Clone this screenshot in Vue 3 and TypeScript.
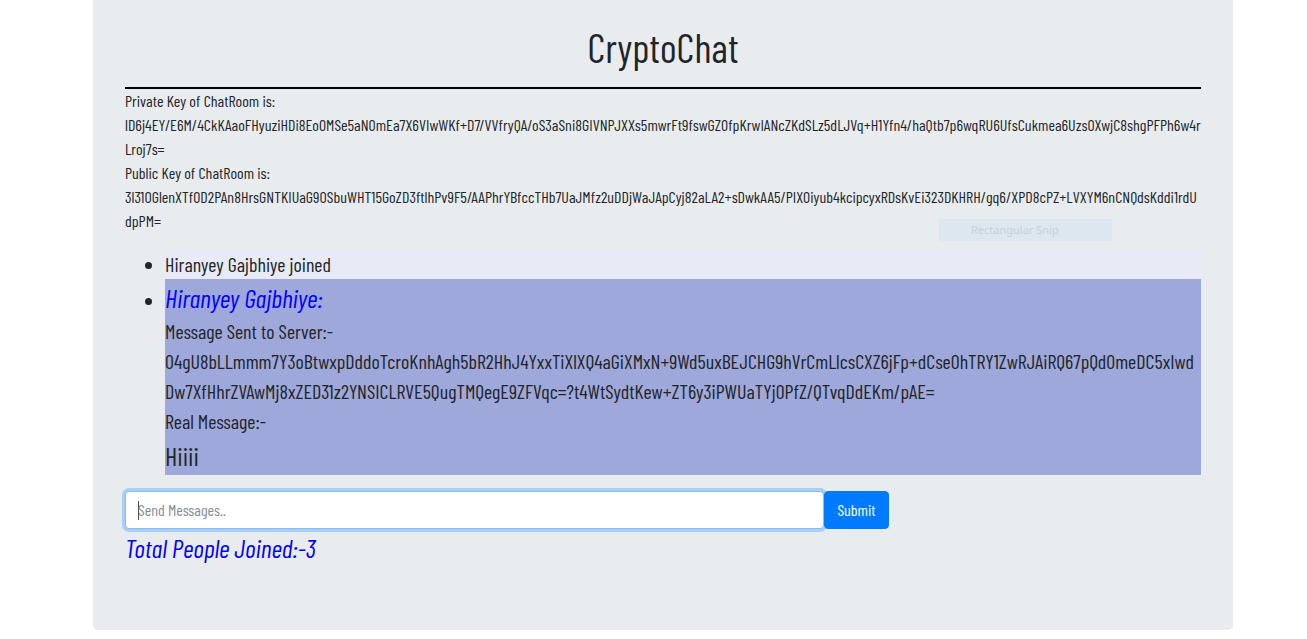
<script setup lang="ts">
import { onMounted, ref } from 'vue'

interface RoomKey {
  label: string
  value: string
}

const keys: RoomKey[] = [
  {
    label: 'Private Key of ChatRoom is:',
    value:
      'lD6j4EY/E6M/4CkKAaoFHyuziHDi8Eo0MSe5aN0mEa7X6VIwWKf+D7/VVfryQA/oS3aSni8GIVNPJXXs5mwrFt9fswGZ0fpKrwIANcZKdSLz5dLJVq+H1Yfn4/haQtb7p6wqRU6UfsCukmea6Uzs0XwjC8shgPFPh6w4rLroj7s=',
  },
  {
    label: 'Public Key of ChatRoom is:',
    value:
      '3l31OGlenXTf0D2PAn8HrsGNTKIUaG9OSbuWHT15GoZD3ftlhPv9F5/AAPhrYBfccTHb7UaJMfz2uDDjWaJApCyj82aLA2+sDwkAA5/PIX0iyub4kcipcyxRDsKvEi323DKHRH/gq6/XPD8cPZ+LVXYM6nCNQdsKddi1rdUdpPM=',
  },
]

const cipher =
  '04gU8bLLmmm7Y3oBtwxpDddoTcroKnhAgh5bR2HhJ4YxxTiXlXQ4aGiXMxN+9Wd5uxBEJCHG9hVrCmLlcsCXZ6jFp+dCse0hTRY1ZwRJAiRQ67pQd0meDC5xIwdDw7XfHhrZVAwMj8xZED31z2YNSICLRVE5QugTMQegE9ZFVqc=?t4WtSydtKew+ZT6y3iPWUaTYj0PfZ/QTvqDdEKm/pAE='

const message = ref('')
const box = ref<HTMLInputElement | null>(null)
onMounted(() => box.value?.focus())
</script>

<template>
  <main class="page">
    <section class="room">
      <h1>CryptoChat</h1>
      <div class="keys">
        <template v-for="key in keys" :key="key.label">
          <p>{{ key.label }}</p>
          <p class="code">{{ key.value }}</p>
        </template>
        <span class="snip">Rectangular Snip</span>
      </div>
      <ul class="feed">
        <li class="joined">Hiranyey Gajbhiye joined</li>
        <li class="message">
          <em class="big name">Hiranyey Gajbhiye:</em>
          <p>Message Sent to Server:-</p>
          <p class="code">{{ cipher }}</p>
          <p>Real Message:-</p>
          <p class="big real">Hiiii</p>
        </li>
      </ul>
      <form class="send" @submit.prevent="message = ''">
        <input ref="box" v-model="message" type="text" placeholder="Send Messages.." aria-label="Send Messages" />
        <span v-if="!message" class="caret" aria-hidden="true"></span>
        <button type="submit">Submit</button>
      </form>
      <em class="big total">Total People Joined:-3</em>
    </section>
  </main>
</template>

<style>
body {
  margin: 0;
  background: #fff;
}
</style>

<style scoped>
.page {
  padding: 0 0 8px 19px;
  color: #212529;
  font-family: "Barlow Condensed", "Roboto Condensed", "Liberation Sans Narrow", "Liberation Sans", sans-serif;
  font-size: 16px;
  line-height: 24px;
}
.room {
  box-sizing: border-box;
  max-width: 1140px;
  margin: 0 auto;
  padding: 23px 32px 64px;
  background: #e9ecef;
  border-radius: 0 0 5px 5px;
}
h1 {
  margin: 0;
  padding-bottom: 16px;
  border-bottom: 2px solid #000;
  font-size: 40px;
  font-weight: 400;
  line-height: 48px;
  text-align: center;
}
p {
  margin: 0;
}
.code {
  word-break: break-all;
}
.keys {
  position: relative;
  padding-bottom: 16px;
}
.snip {
  position: absolute;
  right: 89px;
  bottom: 8px;
  box-sizing: border-box;
  width: 173px;
  height: 22px;
  padding-left: 32px;
  background: #dde7f0;
  color: #c8cfd6;
  font-family: "Noto Sans", sans-serif;
  font-size: 11px;
  line-height: 22px;
}
.feed {
  margin: 0 0 16px;
  padding-left: 40px;
  font-size: 20px;
  line-height: 30px;
}
.joined {
  background: #e8eaf6;
}
.message {
  background: #9fa8da;
}
.big {
  display: block;
  font-size: 26px;
  line-height: 37px;
}
.real {
  line-height: 39px;
}
.name,
.total {
  color: #00f;
}
.send {
  position: relative;
  display: flex;
}
input {
  box-sizing: border-box;
  width: 65%;
  height: 38px;
  padding: 5px 12px 7px;
  border: 1px solid #80bdff;
  border-radius: 4px;
  outline: 0;
  box-shadow: 0 0 0 3px #a9cff7;
  background: #fff;
  color: #495057;
  caret-color: transparent;
  font: inherit;
}
input::placeholder {
  color: #868e96;
  opacity: 1;
}
.caret {
  position: absolute;
  top: 10px;
  left: 13px;
  width: 1px;
  height: 19px;
  background: #495057;
}
button {
  position: relative;
  height: 38px;
  padding: 0 12px;
  border: 1px solid #007bff;
  border-radius: 4px;
  background: #007bff;
  color: #fff;
  font: inherit;
}
</style>
